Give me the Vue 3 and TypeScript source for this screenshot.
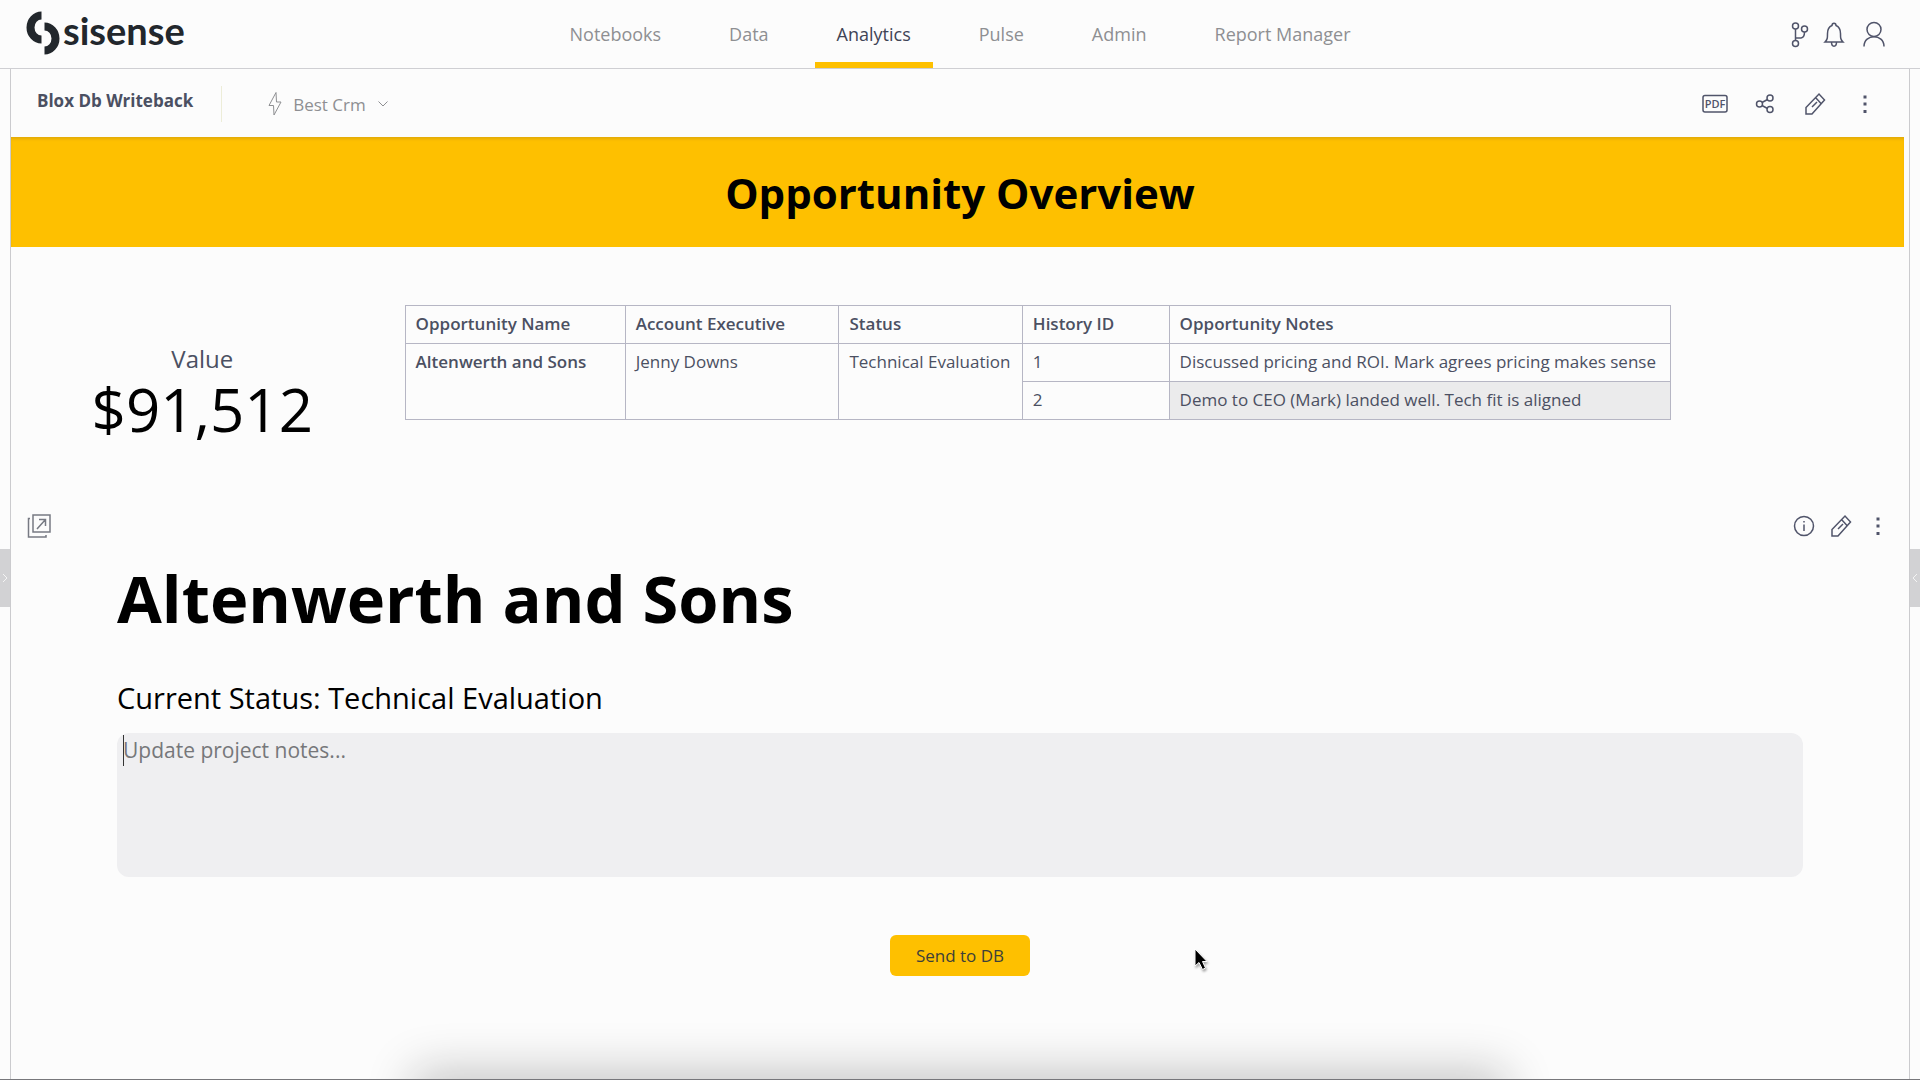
<script setup lang="ts">
import { ref } from 'vue'

interface NavItem {
  label: string
  active?: boolean
}

const navItems: NavItem[] = [
  { label: 'Notebooks' },
  { label: 'Data' },
  { label: 'Analytics', active: true },
  { label: 'Pulse' },
  { label: 'Admin' },
  { label: 'Report Manager' },
]

const columns = ['Opportunity Name', 'Account Executive', 'Status', 'History ID', 'Opportunity Notes']

const opportunity = {
  name: 'Altenwerth and Sons',
  executive: 'Jenny Downs',
  status: 'Technical Evaluation',
  value: '$91,512',
  history: [
    { id: 1, note: 'Discussed pricing and ROI. Mark agrees pricing makes sense' },
    { id: 2, note: 'Demo to CEO (Mark) landed well. Tech fit is aligned' },
  ],
}

const notes = ref('')
</script>

<template>
  <div class="page">
    <header class="topbar">
      <a class="logo" href="#" aria-label="sisense">
        <svg class="logo-mark" width="34" height="46" viewBox="0 0 34 46" aria-hidden="true">
          <path d="M15.500 1.500A15 16 0 0 0 15.500 33.500V25.500A7 8 0 0 1 15.500 9.500Z" />
          <path d="M18.500 12.500A15 16 0 0 1 18.500 44.500V36.500A7 8 0 0 0 18.500 20.500Z" />
        </svg>
        <span class="logo-text">sisense</span>
      </a>
      <nav class="nav">
        <a v-for="item in navItems" :key="item.label" href="#" class="nav-link" :class="{ active: item.active }">{{ item.label }}</a>
      </nav>
      <div class="account">
        <button type="button" class="icon-btn" aria-label="Branches">
          <svg width="28" height="28" viewBox="0 0 28 28">
            <circle cx="9.500" cy="5" r="3" /><circle cx="9.500" cy="22.500" r="3" /><circle cx="18.500" cy="8" r="3" />
            <path d="M9.500 8v11.500M9.500 17h5.500q3.500-.5 3.500-6" />
          </svg>
        </button>
        <button type="button" class="icon-btn" aria-label="Notifications">
          <svg width="28" height="28" viewBox="0 0 28 28">
            <path d="M5 21h18c-2.500-2.500-2.500-4-2.500-8.500 0-5-2-7-4.500-8 0-3-4-3-4 0-2.500 1-4.500 3-4.500 8 0 4.500 0 6-2.500 8.500ZM11.500 21c0 5.500 5 5.500 5 0" />
          </svg>
        </button>
        <button type="button" class="icon-btn user" aria-label="Account">
          <svg width="28" height="28" viewBox="0 0 28 28">
            <circle cx="14" cy="8.500" r="7" /><path d="M4 25.500c0-13 20-13 20 0" />
          </svg>
        </button>
      </div>
    </header>

    <div class="body">
      <button type="button" class="side-tab left" aria-label="Open left panel">
        <svg width="6" height="10" viewBox="0 0 6 10"><path d="M1 1l4 4-4 4" /></svg>
      </button>
      <main class="board">
        <div class="toolbar">
          <h2 class="board-title">Blox Db Writeback</h2>
          <button type="button" class="source">
            <svg width="14" height="26" viewBox="0 0 14 26"><path d="M8 1.500 1 14.500h4.500L6 24l7-13H8.500Z" /></svg>
            <span>Best Crm</span>
            <svg width="12" height="8" viewBox="0 0 12 8"><path d="M1.500 1.500 6 6l4.500-4.500" /></svg>
          </button>
          <div class="tools">
            <button type="button" class="icon-btn" aria-label="Export to PDF">
              <svg width="28" height="28" viewBox="0 0 28 28">
                <rect x="2" y="5.500" width="24" height="16.500" rx="2" />
                <text x="14" y="18" text-anchor="middle">PDF</text>
              </svg>
            </button>
            <button type="button" class="icon-btn" aria-label="Share">
              <svg width="28" height="28" viewBox="0 0 28 28">
                <circle cx="8.500" cy="14" r="3" /><circle cx="19" cy="8" r="3" /><circle cx="19" cy="19.500" r="3" />
                <path d="m11 12.500 5.500-3M11 15.500l5.500 3" />
              </svg>
            </button>
            <button type="button" class="icon-btn" aria-label="Edit dashboard">
              <svg width="28" height="28" viewBox="0 0 28 28">
                <path d="M5 24v-6.500L18 4l5.500 6L11 24ZM14.500 7.500l5.500 6M11 17l5-5" />
              </svg>
            </button>
            <button type="button" class="icon-btn dots" aria-label="More">
              <svg width="28" height="28" viewBox="0 0 28 28"><path d="M12.500 5.500h3v3h-3zM12.500 12.500h3v3h-3zM12.500 20h3v3h-3z" /></svg>
            </button>
          </div>
        </div>

        <h1 class="banner">Opportunity Overview</h1>

        <section class="summary">
          <div class="value">
            <div class="value-label">Value</div>
            <div class="value-number">{{ opportunity.value }}</div>
          </div>
          <table class="grid">
            <colgroup>
              <col class="c-name" /><col class="c-exec" /><col class="c-status" /><col class="c-id" /><col />
            </colgroup>
            <thead>
              <tr><th v-for="c in columns" :key="c" scope="col">{{ c }}</th></tr>
            </thead>
            <tbody>
              <tr v-for="(h, i) in opportunity.history" :key="h.id">
                <template v-if="i === 0">
                  <th scope="row" rowspan="2">{{ opportunity.name }}</th>
                  <td rowspan="2">{{ opportunity.executive }}</td>
                  <td rowspan="2">{{ opportunity.status }}</td>
                </template>
                <td>{{ h.id }}</td>
                <td :class="{ shaded: i === 1 }">{{ h.note }}</td>
              </tr>
            </tbody>
          </table>
        </section>

        <section class="widget">
          <div class="widget-bar">
            <button type="button" class="icon-btn expand" aria-label="Open widget">
              <svg width="28" height="28" viewBox="0 0 28 28">
                <path d="M8 3h17v17H8ZM5 6.500H3.500V25H21v-2M12 17l8.500-9.500M14 7.500h6.500V14" />
              </svg>
            </button>
            <div class="widget-tools">
              <button type="button" class="icon-btn" aria-label="Info">
                <svg width="28" height="28" viewBox="0 0 28 28">
                  <circle cx="14" cy="14" r="9.500" /><path d="M14 12.500v6.500M14 9v1.500" />
                </svg>
              </button>
              <button type="button" class="icon-btn" aria-label="Edit widget">
                <svg width="28" height="28" viewBox="0 0 28 28">
                  <path d="M5 24v-6.500L18 4l5.500 6L11 24ZM14.500 7.500l5.500 6M11 17l5-5" />
                </svg>
              </button>
              <button type="button" class="icon-btn dots" aria-label="Widget menu">
                <svg width="28" height="28" viewBox="0 0 28 28"><path d="M12.500 5.500h3v3h-3zM12.500 12.500h3v3h-3zM12.500 20h3v3h-3z" /></svg>
              </button>
            </div>
          </div>
          <form class="form" @submit.prevent>
            <h2 class="account-name">{{ opportunity.name }}</h2>
            <label class="status" for="notes">Current Status: {{ opportunity.status }}</label>
            <div class="notes-box">
              <textarea id="notes" v-model="notes" placeholder="Update project notes..."></textarea>
              <span class="caret"></span>
            </div>
            <button type="submit" class="send">Send to DB</button>
          </form>
        </section>
      </main>
      <button type="button" class="side-tab right" aria-label="Open right panel">
        <svg width="6" height="10" viewBox="0 0 6 10"><path d="M5 1 1 5l4 4" /></svg>
      </button>
    </div>

    <div class="dock-shadow"></div>
    <svg class="cursor" width="20" height="28" viewBox="0 0 20 28" aria-hidden="true">
      <path d="M1 1v17l4-3.500 3.500 7 3-1.500-3-6.500H13Z" />
    </svg>
  </div>
</template>

<style>
html,
body {
  margin: 0;
  background: #fcfcfc;
}
</style>

<style scoped>
* {
  box-sizing: border-box;
}

.page {
  position: relative;
  display: flex;
  flex-direction: column;
  min-height: 100vh;
  overflow: hidden;
  border-bottom: 1px solid #77777b;
  background: #fcfcfc;
  color: #4b5062;
  font-family: 'Open Sans', 'Noto Sans', sans-serif;
}

button {
  padding: 0;
  border: 0;
  background: none;
  color: inherit;
  font-family: inherit;
}

svg {
  display: block;
  flex: none;
  fill: none;
  stroke: #50546a;
  stroke-width: 2;
}

.topbar {
  display: grid;
  grid-template-columns: 1fr auto 1fr;
  height: 69px;
  border-bottom: 1px solid #cfcfd3;
}

.logo {
  display: flex;
  align-items: center;
  gap: 3px;
  padding: 0 0 3px 26px;
  color: #22272c;
  text-decoration: none;
}

.logo-mark {
  fill: #22272c;
  stroke: none;
}

.logo-text {
  margin-bottom: 6px;
  font: 700 38px/44px Lato, sans-serif;
}

.nav {
  display: flex;
  gap: 24px;
}

.nav-link {
  padding: 0 22px;
  border-bottom: 6px solid transparent;
  color: #8e8f92;
  font-size: 18px;
  line-height: 68px;
  height: 68px;
  text-decoration: none;
}

.nav-link.active {
  border-color: #fec000;
  color: #3f4456;
}

.account {
  display: flex;
  align-items: center;
  justify-content: flex-end;
  gap: 6px;
  padding: 2px 32px 0 0;
}

.user {
  margin-left: 6px;
}

.body {
  display: flex;
  flex: 1;
  align-items: stretch;
}

.side-tab {
  display: flex;
  align-items: center;
  justify-content: center;
  width: 10px;
  height: 58px;
  margin-top: 480px;
  background: #d2d2d4;
}

.side-tab svg {
  stroke: #f4f4f4;
  stroke-width: 1;
}

.board {
  flex: 1;
  border: solid #cbcbce;
  border-width: 0 1px;
}

.toolbar {
  display: flex;
  align-items: center;
  height: 68px;
  padding: 2px 30px 0 26px;
}

.board-title {
  display: flex;
  align-items: center;
  height: 36px;
  margin: 0;
  padding: 0 28px 6px 0;
  border-right: 1px solid #ededd8;
  font-size: 17px;
  line-height: 24px;
}

.source {
  display: flex;
  align-items: center;
  gap: 11px;
  margin-left: 46px;
  color: #8e8f92;
  font-size: 17px;
}

.source svg {
  stroke: #8e8f92;
  stroke-width: 1;
}

.tools {
  display: flex;
  gap: 22px;
  margin-left: auto;
}

.icon-btn {
  width: 28px;
  height: 28px;
}

.icon-btn text {
  fill: #50546a;
  stroke: none;
  font-size: 11px;
  font-weight: 600;
}

.icon-btn svg {
  stroke-width: 1.5;
}

.dots svg {
  fill: #50546a;
  stroke: none;
}

.banner {
  margin: 0 5px 0 0;
  padding: 2px 0 0 5px;
  background: #fec000;
  box-shadow: inset 0 3px 3px -1px #e2aa08;
  color: #000;
  font-size: 42px;
  line-height: 108px;
  text-align: center;
}

.summary {
  display: flex;
  align-items: flex-start;
  padding-top: 58px;
}

.value {
  flex: none;
  width: 20%;
  margin-right: 14px;
  padding: 38px 0 0 3px;
  text-align: center;
}

.value-label {
  font-size: 24px;
  line-height: 32px;
}

.value-number {
  color: #000;
  font-size: 60px;
  line-height: 68px;
}

.grid {
  width: 66.7%;
  border-collapse: collapse;
  table-layout: fixed;
  font-size: 17px;
  line-height: 24px;
}

.c-name {
  width: 17.4%;
}

.c-exec {
  width: 16.9%;
}

.c-status {
  width: 14.5%;
}

.c-id {
  width: 11.6%;
}

.grid th,
.grid td {
  height: 38px;
  padding: 6px 10px;
  border: 1px solid #b6b6c4;
  text-align: left;
  vertical-align: top;
  white-space: nowrap;
}

.grid th {
  font-weight: 600;
}

.grid .shaded {
  background: #ebebec;
}

.widget {
  margin-top: 69px;
}

.widget-bar {
  display: flex;
  justify-content: space-between;
  padding: 0 17px 0 14px;
}

.expand svg {
  stroke: #777a83;
}

.widget-tools {
  display: flex;
  gap: 9px;
}

.form {
  display: flex;
  flex-direction: column;
  padding: 0 106px;
}

.account-name {
  margin: 13px 0 0;
  color: #000;
  font-size: 65px;
  line-height: 90px;
}

.status {
  margin-top: 34px;
  color: #000;
  font-size: 29px;
  line-height: 42px;
}

.notes-box {
  position: relative;
  display: flex;
  margin-top: 14px;
}

.notes-box textarea {
  flex: 1;
  height: 144px;
  padding: 1px 6px;
  border: 0;
  border-radius: 12px;
  background: #efeff1;
  color: #3f4456;
  font: 21px/32px 'Open Sans', 'Noto Sans', sans-serif;
  resize: none;
}

.notes-box textarea::placeholder {
  color: #76777a;
}

.caret {
  position: absolute;
  top: 2px;
  left: 6px;
  width: 1px;
  height: 31px;
  background: #333;
}

.send {
  align-self: center;
  width: 140px;
  height: 41px;
  margin-top: 58px;
  border-radius: 6px;
  background: #fec000;
  color: #3d3f3a;
  font-size: 17px;
}

.dock-shadow {
  position: absolute;
  right: 22%;
  bottom: -40px;
  left: 22%;
  height: 40px;
  box-shadow: 0 0 48px 8px #c4c4c4;
}

.cursor {
  position: absolute;
  top: 948px;
  left: 1194px;
  fill: #000;
  stroke: #fff;
  stroke-width: 1;
  filter: drop-shadow(1px 2px 1px #0005);
}
</style>
